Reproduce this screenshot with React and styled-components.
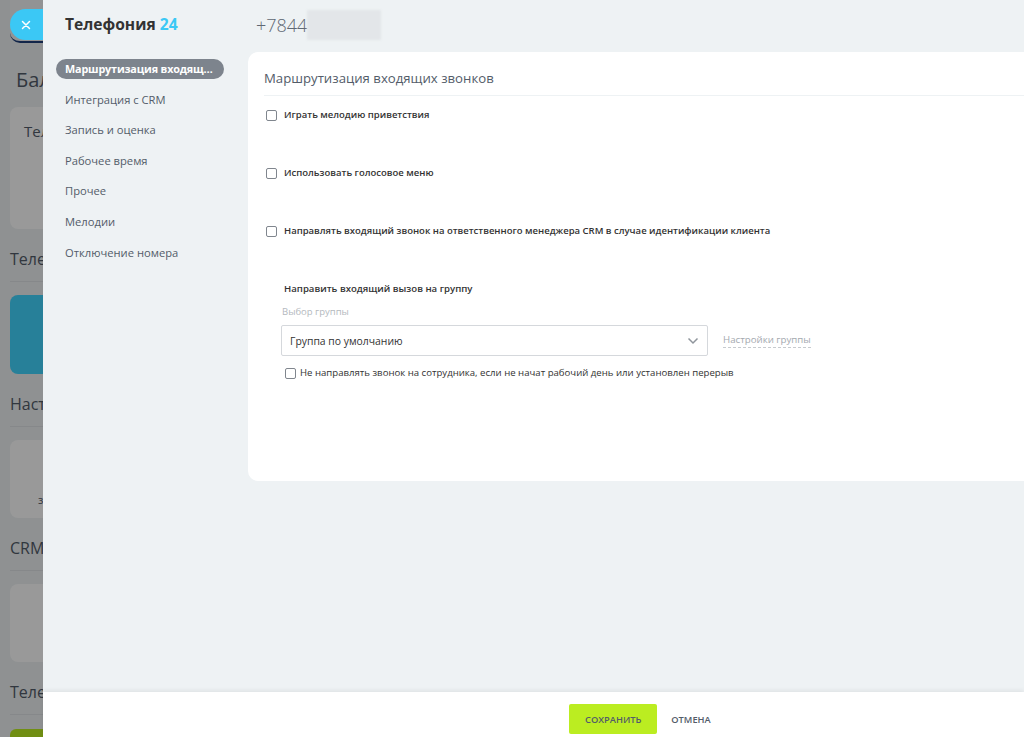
import styled, { createGlobalStyle } from "styled-components";

//STYLES

const Global = createGlobalStyle`
  html, body {
    margin: 0;
    padding: 0;
  }
  body {
    font-family: "Open Sans", "Liberation Sans", sans-serif;
    color: #333;
  }
`;

const Screen = styled.div`
  position: relative;
  width: 1024px;
  height: 737px;
  overflow: hidden;
  background: #eef2f4;
`;

// page behind the slider (only its left edge shows)
const BackPage = styled.div`
  display: flex;
  flex-direction: column;
  padding: 0 0 0 10px;
  width: 400px;
`;
const BackTop = styled.div`
  height: 41px;
  width: 100%;
  background: #f3f5f7;
  border-radius: 0 0 0 10px;
  border-bottom: 2px solid #1f3f7a;
`;
const BackTitle = styled.div`
  font-size: 20px;
  line-height: 24px;
  padding: 25px 0 0 6px;
  color: #535c69;
`;
const BackCard = styled.div`
  margin-top: ${(p) => p.$top || 13}px;
  height: ${(p) => p.$h || 78}px;
  border-radius: 8px;
  background: ${(p) => p.$bg || "#ffffff"};
  padding: 14px 14px;
  box-sizing: border-box;
  font-size: 15px;
  color: #535c69;
`;
const BackHead = styled.div`
  padding-top: 20px;
  line-height: 20px;
  padding-bottom: 12px;
  border-bottom: 1px solid #dfe3e6;
  font-size: 16px;
  color: #535c69;
`;
const BackSmall = styled.div`
  font-size: 11px;
  margin: 38px 0 0 14px;
`;
const BackButton = styled.div`
  margin-top: 14px;
  height: 36px;
  width: 120px;
  border-radius: 6px;
  background: #bbed21;
`;

const Overlay = styled.div`
  position: absolute;
  inset: 0;
  background: rgba(0, 0, 0, 0.4);
`;

const CloseTab = styled.div`
  position: absolute;
  left: 10px;
  top: 9px;
  width: 60px;
  height: 31px;
  border-radius: 16px 0 0 16px;
  background: #3bc8f5;
  display: flex;
  align-items: center;
  padding-left: 11px;
  box-sizing: border-box;
`;

const Slider = styled.div`
  position: absolute;
  left: 43px;
  top: 0;
  right: 0;
  bottom: 0;
  display: flex;
  flex-direction: column;
  background: #eef2f4;
`;
const Body = styled.div`
  flex: 1;
  display: flex;
`;
const Sidebar = styled.div`
  width: 168px;
  padding: 0 24px 0 13px;
  flex-shrink: 0;
`;
const SideTitle = styled.div`
  font-size: 15.6px;
  font-weight: 700;
  line-height: 24px;
  padding: 12px 0 0 9px;
  color: #333;
  span {
    color: #3bc8f5;
  }
`;
const Menu = styled.div`
  display: flex;
  flex-direction: column;
  gap: 10.6px;
  margin-top: 23px;
`;
const MenuItem = styled.div`
  height: 20px;
  line-height: 20px;
  padding: 0 ${(p) => (p.$active ? 5 : 9)}px 0 9px;
  font-size: ${(p) => (p.$active ? 10.8 : 11.2)}px;
  letter-spacing: ${(p) => (p.$active ? "-0.15px" : "0")};
  border-radius: 10px;
  white-space: nowrap;
  overflow: hidden;
  text-overflow: ellipsis;
  color: ${(p) => (p.$active ? "#ffffff" : "#535c69")};
  font-weight: ${(p) => (p.$active ? 700 : 400)};
  background: ${(p) => (p.$active ? "#7d848d" : "transparent")};
`;

const Main = styled.div`
  flex: 1;
  display: flex;
  flex-direction: column;
`;
const Header = styled.div`
  height: 52px;
  display: flex;
  align-items: flex-start;
  padding: 10px 0 0 8px;
  box-sizing: border-box;
`;
const Phone = styled.div`
  font-size: 18px;
  font-weight: 300;
  line-height: 30px;
  color: #5f6873;
  display: flex;
`;
const Blur = styled.div`
  width: 74px;
  height: 30px;
  background: #e3e6e9;
  filter: blur(1px);
`;

const Card = styled.div`
  height: 429px;
  background: #ffffff;
  border-radius: 10px 0 0 10px;
  padding: 16px 0 0 16px;
  box-sizing: border-box;
`;
const CardTitle = styled.div`
  font-size: 13.2px;
  line-height: 20px;
  color: #535c69;
  padding-bottom: 7px;
  border-bottom: 1px solid #eef2f4;
`;
const Options = styled.div`
  display: flex;
  flex-direction: column;
  gap: 42px;
  padding: 11px 0 0 2px;
`;
const CheckRow = styled.label`
  display: flex;
  align-items: center;
  gap: ${(p) => p.$gap || 7}px;
  line-height: 16px;
  font-size: ${(p) => (p.$bold ? 9.5 : 9.6)}px;
  font-weight: ${(p) => (p.$bold ? 600 : 400)};
  color: #333;
`;
const Box = styled.input`
  appearance: none;
  margin: 0;
  width: 11px;
  height: 11px;
  border: 1px solid #80868e;
  border-radius: 2px;
  background: #fff;
  box-sizing: border-box;
  flex-shrink: 0;
`;

const Group = styled.div`
  display: flex;
  flex-direction: column;
  padding: 0 0 0 15px;
`;
const GroupTitle = styled.div`
  font-size: 9.6px;
  font-weight: 600;
  line-height: 16px;
  padding-left: 3px;
`;
const FieldLabel = styled.div`
  font-size: 9.5px;
  line-height: 16px;
  color: #b4b9be;
  margin-top: 7px;
  padding-left: 1px;
`;
const SelectRow = styled.div`
  display: flex;
  align-items: center;
  margin-top: 5px;
  gap: 15px;
`;
const Select = styled.div`
  width: 427px;
  height: 31px;
  box-sizing: border-box;
  border: 1px solid #d5d8dc;
  border-radius: 2px;
  display: flex;
  align-items: center;
  justify-content: space-between;
  padding: 0 8px 0 8px;
  font-size: 10.4px;
  color: #333;
`;
const DashLink = styled.span`
  font-size: 9.7px;
  color: #a4a9af;
  border-bottom: 1px dashed #c7cbcf;
  line-height: 14px;
`;
const GroupCheck = styled.div`
  margin-top: 9px;
  padding-left: 4px;
`;

const Footer = styled.div`
  height: 45px;
  background: #ffffff;
  box-shadow: 0 -2px 4px rgba(0, 0, 0, 0.06);
  display: flex;
  justify-content: center;
  align-items: flex-start;
  padding: 12px 0 0 213px;
  box-sizing: border-box;
  gap: 14px;
`;
const Button = styled.button`
  height: 30px;
  padding: 0;
  border: none;
  border-radius: 2px;
  font-family: "Open Sans", sans-serif;
  font-size: 9.3px;
  font-weight: 600;
  color: #535c69;
  background: ${(p) => (p.$primary ? "#bbed21" : "transparent")};
  width: ${(p) => (p.$primary ? "88px" : "auto")};
`;

//COMPONENT

const menu = [
  "Маршрутизация входящих звонков",
  "Интеграция с CRM",
  "Запись и оценка",
  "Рабочее время",
  "Прочее",
  "Мелодии",
  "Отключение номера",
];

export default function App() {
  return (
    <Screen>
      <Global />
      <BackPage>
        <BackTop />
        <BackTitle>Баланс</BackTitle>
        <BackCard $top={15} $h={122}>Телефония</BackCard>
        <BackHead>Телефония</BackHead>
        <BackCard $bg="#41d5ff" $h={79} />
        <BackHead>Настройки</BackHead>
        <BackCard>
          <BackSmall>з</BackSmall>
        </BackCard>
        <BackHead>CRM-формы</BackHead>
        <BackCard />
        <BackHead>Телефония</BackHead>
        <BackButton />
      </BackPage>
      <Overlay />
      <CloseTab>
        <svg width="10" height="10" viewBox="0 0 10 10">
          <path d="M1.5 1.5 L8.5 8.5 M8.5 1.5 L1.5 8.5" stroke="#fff" strokeWidth="1.5" strokeLinecap="round" />
        </svg>
      </CloseTab>

      <Slider>
        <Body>
          <Sidebar>
            <SideTitle>
              Телефония <span>24</span>
            </SideTitle>
            <Menu>
              {menu.map((m, i) => (
                <MenuItem key={m} $active={i === 0}>
                  {m}
                </MenuItem>
              ))}
            </Menu>
          </Sidebar>

          <Main>
            <Header>
              <Phone>
                +7844<Blur />
              </Phone>
            </Header>
            <Card>
              <CardTitle>Маршрутизация входящих звонков</CardTitle>
              <Options>
                <CheckRow $bold>
                  <Box type="checkbox" />
                  Играть мелодию приветствия
                </CheckRow>
                <CheckRow $bold>
                  <Box type="checkbox" />
                  Использовать голосовое меню
                </CheckRow>
                <CheckRow $bold>
                  <Box type="checkbox" />
                  Направлять входящий звонок на ответственного менеджера CRM в случае идентификации клиента
                </CheckRow>
                <Group>
                  <GroupTitle>Направить входящий вызов на группу</GroupTitle>
                  <FieldLabel>Выбор группы</FieldLabel>
                  <SelectRow>
                    <Select>
                      Группа по умолчанию
                      <svg width="12" height="8" viewBox="0 0 12 8">
                        <path d="M1.5 1.5 L6 6 L10.5 1.5" fill="none" stroke="#8f959c" strokeWidth="1.5" />
                      </svg>
                    </Select>
                    <DashLink>Настройки группы</DashLink>
                  </SelectRow>
                  <GroupCheck>
                    <CheckRow $gap={4}>
                      <Box type="checkbox" />
                      Не направлять звонок на сотрудника, если не начат рабочий день или установлен перерыв
                    </CheckRow>
                  </GroupCheck>
                </Group>
              </Options>
            </Card>
          </Main>
        </Body>
        <Footer>
          <Button $primary>СОХРАНИТЬ</Button>
          <Button>ОТМЕНА</Button>
        </Footer>
      </Slider>
    </Screen>
  );
}
